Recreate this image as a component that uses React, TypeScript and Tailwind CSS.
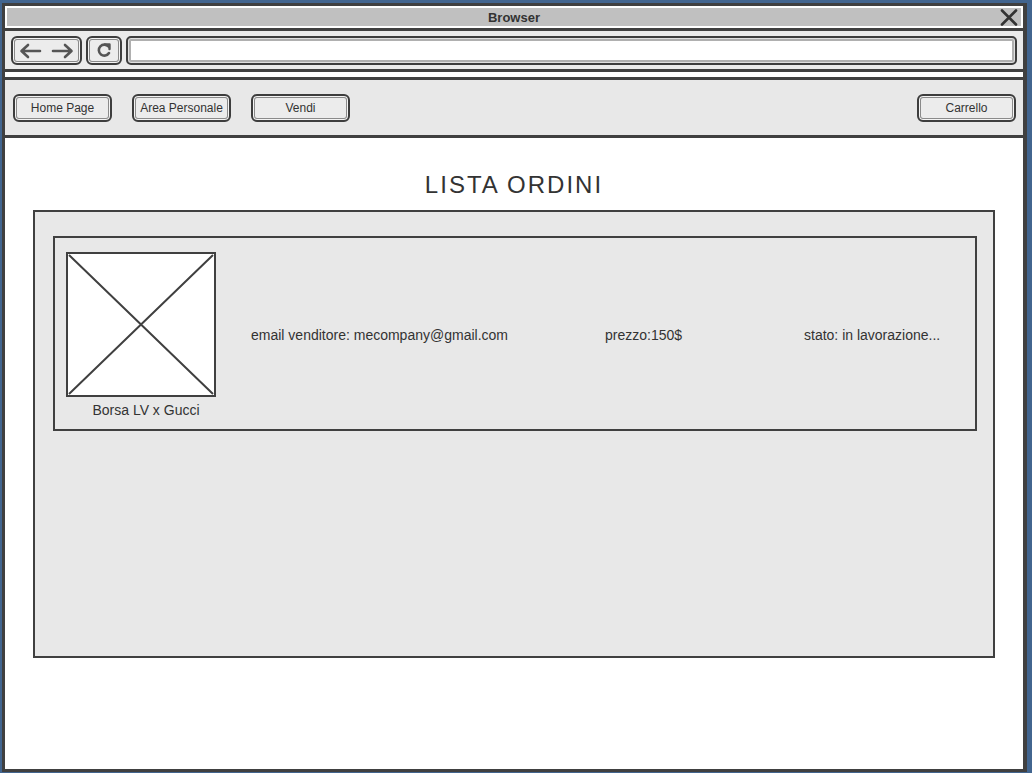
import React from "react";

const font = { fontFamily: '"Liberation Sans", Arial, sans-serif' };

function SketchButton({ label, className = "" }: { label: string; className?: string }) {
  return (
    <div
      className={`flex items-center justify-center h-[28px] w-[99px] rounded-[6px] border-2 border-[#3d3d3d] bg-[#ececec] shadow-[inset_0_0_0_1px_#f4f4f4,inset_0_0_0_2px_#8a8a8a] text-[12px] text-[#333] ${className}`}
    >
      {label}
    </div>
  );
}

export default function App() {
  return (
    <div className="w-[1032px] h-[773px] bg-[#42658f] pt-[3px] pl-[2px] overflow-hidden" style={font}>
      <div className="w-[1025px] h-[769px] border-t-[3px] border-l-[3px] border-b-[3px] border-r-4 border-[#404040] bg-white flex flex-col">
        {/* Title bar */}
        <div className="mx-[2px] mt-[2px] h-[18px] bg-[#c0c0c0] flex items-center justify-center relative">
          <span className="text-[13px] font-bold text-[#333] leading-none">Browser</span>
          <svg className="absolute right-[3px] top-[1px]" width="18" height="17" viewBox="0 0 18 17">
            <path d="M2 1.5 L16 15.5 M16 1.5 L2 15.5" stroke="#333" strokeWidth="2.6" strokeLinecap="round" />
          </svg>
        </div>
        <div className="h-[2px]" />
        <div className="h-[3px] bg-[#404040]" />
        {/* Toolbar */}
        <div className="h-[38px] bg-[#ebebeb] flex items-start pt-[5px] pl-[6px] pr-[6px] gap-[4px]">
          <div className="h-[29px] w-[71px] rounded-[6px] border-2 border-[#3d3d3d] bg-[#ececec] shadow-[inset_0_0_0_1px_#f4f4f4,inset_0_0_0_2px_#8a8a8a] flex items-center justify-center gap-[9px]">
            <svg width="23" height="16" viewBox="0 0 23 16">
              <path d="M21 8 H3 M9 2 L2.5 8 L9 14" stroke="#555" strokeWidth="2.6" fill="none" strokeLinecap="round" strokeLinejoin="round" />
            </svg>
            <svg width="23" height="16" viewBox="0 0 23 16">
              <path d="M2 8 H20 M14 2 L20.5 8 L14 14" stroke="#555" strokeWidth="2.6" fill="none" strokeLinecap="round" strokeLinejoin="round" />
            </svg>
          </div>
          <div className="h-[29px] w-[36px] rounded-[6px] border-2 border-[#3d3d3d] bg-[#ececec] shadow-[inset_0_0_0_1px_#f4f4f4,inset_0_0_0_2px_#8a8a8a] flex items-center justify-center">
            <svg width="16" height="17" viewBox="0 0 16 17">
              <path d="M12.5 4.5 A5.5 5.5 0 1 0 13 11" stroke="#555" strokeWidth="2.6" fill="none" strokeLinecap="round" />
              <path d="M9 2.5 L13.5 2.5 L13.5 7" stroke="#555" strokeWidth="2.4" fill="none" strokeLinecap="round" strokeLinejoin="round" />
            </svg>
          </div>
          <div className="h-[29px] flex-1 rounded-[5px] border-2 border-[#3d3d3d] bg-white shadow-[inset_0_0_0_1px_#e0e0e0,inset_0_0_0_3px_#b0b0b0]" />
        </div>
        <div className="h-[3px] bg-[#404040]" />
        <div className="h-[5px]" />
        <div className="h-[3px] bg-[#404040]" />
        {/* Nav bar */}
        <div className="h-[55px] bg-[#e8e8e8] flex items-start pt-[14px] pl-[8px] pr-[7px]">
          <SketchButton label="Home Page" />
          <SketchButton label="Area Personale" className="ml-[20px]" />
          <SketchButton label="Vendi" className="ml-[20px]" />
          <div className="flex-1" />
          <SketchButton label="Carrello" />
        </div>
        <div className="h-[3px] bg-[#404040]" />
        {/* Content */}
        <div className="flex-1 flex flex-col">
          <h1 className="mt-[33px] h-[28px] text-center text-[24px] leading-[28px] tracking-[2px] text-[#333] font-normal">
            LISTA ORDINI
          </h1>
          <div className="mt-[11px] mx-[28px] h-[448px] border-2 border-[#404040] bg-[#e8e8e8] pt-[24px] pl-[18px] pr-[16px]">
            <div className="h-[195px] border-2 border-[#404040] bg-[#e8e8e8] pt-[14px] pl-[11px] flex items-start">
              <div className="flex flex-col items-center w-[150px]">
                <div className="w-[150px] h-[145px] border-2 border-[#404040] bg-white">
                  <svg width="146" height="141" viewBox="0 0 146 141" className="block">
                    <path d="M1 1 L145 140 M145 1 L1 140" stroke="#404040" strokeWidth="2" />
                  </svg>
                </div>
                <div className="mt-[4px] pl-[10px] text-[14px] leading-[18px] text-[#333]">Borsa LV x Gucci</div>
              </div>
              <div className="ml-[35px] mt-[73px] flex items-center text-[14px] leading-[20px] text-[#333]">
                <div className="w-[354px]">email venditore: mecompany@gmail.com</div>
                <div className="w-[199px]">prezzo:150$</div>
                <div>stato: in lavorazione...</div>
              </div>
            </div>
          </div>
        </div>
      </div>
    </div>
  );
}
